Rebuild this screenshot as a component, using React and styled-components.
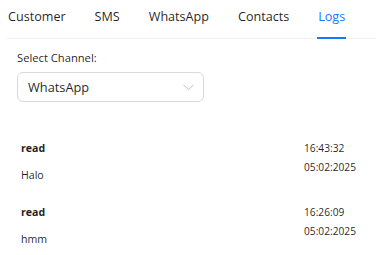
import React from "react";
import styled, { createGlobalStyle } from "styled-components";

const Global = createGlobalStyle`
  html, body { margin: 0; padding: 0; background: #fff; }
  body { font-family: "Open Sans", "Noto Sans", sans-serif; color: rgba(0,0,0,0.88); }
`;

const Page = styled.div`
  width: 376px;
  height: 255px;
  overflow: hidden;
`;

const TabBar = styled.div`
  display: flex;
  gap: 29px;
  margin-left: 7px;
  padding-left: 1px;
  border-bottom: 1px solid #f0f0f0;
`;

const Tab = styled.div`
  position: relative;
  font-size: 12.6px;
  line-height: 20px;
  padding: 7px 0 11px;
  color: ${(p) => (p.$active ? "#1677ff" : "rgba(0,0,0,0.88)")};
  &::after {
    content: "";
    display: ${(p) => (p.$active ? "block" : "none")};
    position: absolute;
    left: -1px;
    right: -1px;
    bottom: -1px;
    height: 2px;
    background: #1677ff;
  }
`;

const Content = styled.div`
  padding: 11px 17px 0;
`;

const Label = styled.div`
  font-size: 11.2px;
  line-height: 16px;
  margin-bottom: 6px;
`;

const SelectBox = styled.div`
  box-sizing: border-box;
  width: 187px;
  height: 30px;
  border: 1px solid #d9d9d9;
  border-radius: 6px;
  display: flex;
  align-items: center;
  justify-content: space-between;
  padding: 0 9px 0 10px;
  font-size: 12.8px;
`;

const LogList = styled.div`
  margin-top: 37px;
  padding-left: 4px;
  display: flex;
  flex-direction: column;
  gap: 18px;
`;

const LogRow = styled.div`
  display: grid;
  grid-template-columns: 1fr 55px;
`;

const LogMain = styled.div`
  display: flex;
  flex-direction: column;
  gap: 8px;
  font-size: 10.6px;
  line-height: 19px;
`;

const Status = styled.div`
  font-weight: 700;
`;

const Stamp = styled.div`
  font-size: 10.2px;
  line-height: 19px;
  white-space: nowrap;
`;

const logs = [
  { status: "read", text: "Halo", time: "16:43:32", date: "05:02:2025" },
  { status: "read", text: "hmm", time: "16:26:09", date: "05:02:2025" },
];

export default function App() {
  return (
    <Page>
      <Global />
      <TabBar>
        {["Customer", "SMS", "WhatsApp", "Contacts", "Logs"].map((t) => (
          <Tab key={t} $active={t === "Logs"}>{t}</Tab>
        ))}
      </TabBar>
      <Content>
        <Label>Select Channel:</Label>
        <SelectBox>
          <span>WhatsApp</span>
          <svg width="11" height="7" viewBox="0 0 11 7" fill="none">
            <path d="M0.5 0.8 L5.5 5.8 L10.5 0.8" stroke="#bfbfbf" strokeWidth="1" />
          </svg>
        </SelectBox>
        <LogList>
          {logs.map((l, i) => (
            <LogRow key={i}>
              <LogMain>
                <Status>{l.status}</Status>
                <div>{l.text}</div>
              </LogMain>
              <div>
                <Stamp>{l.time}</Stamp>
                <Stamp>{l.date}</Stamp>
              </div>
            </LogRow>
          ))}
        </LogList>
      </Content>
    </Page>
  );
}
